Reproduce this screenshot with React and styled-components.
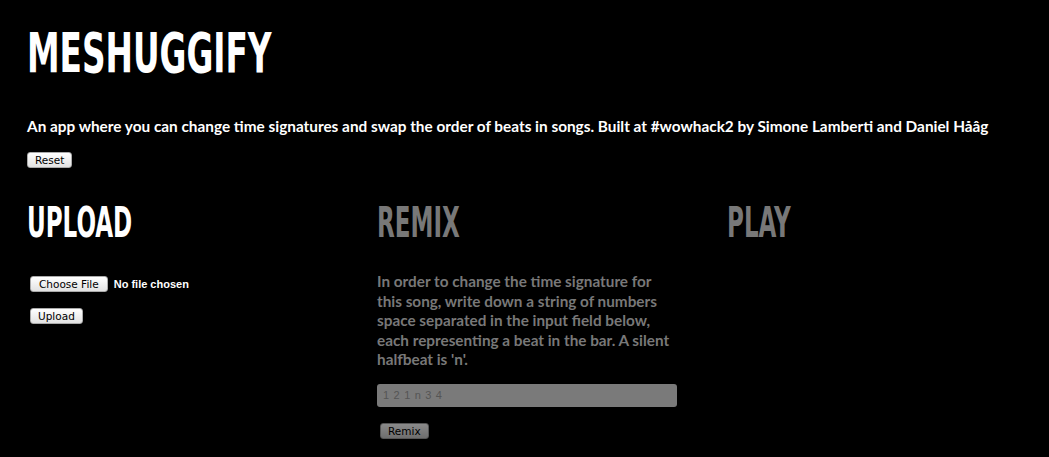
import React from 'react';
import styled, { createGlobalStyle } from 'styled-components';

const GlobalStyle = createGlobalStyle`
  html, body {
    margin: 0;
    padding: 0;
    background: #000;
  }

  body {
    font-family: Lato, "Liberation Sans", sans-serif;
    color: #fff;
  }
`;

const Page = styled.div`
  width: 1049px;
  height: 457px;
  padding: 0 27px;
  box-sizing: border-box;
  background: #000;
  overflow: hidden;
`;

const Title = styled.h1`
  margin: 0;
  padding-top: 22px;
  height: 62px;
  font-family: "DejaVu Sans Condensed", "DejaVu Sans", sans-serif;
  font-weight: 700;
  font-size: 56px;
  line-height: 62px;
  transform: scaleX(0.65);
  transform-origin: left center;
  white-space: nowrap;
`;

const Tagline = styled.p`
  margin: 32px 0 0;
  font-weight: 700;
  font-size: 15.35px;
  line-height: 20px;
  white-space: nowrap;
`;

const Button = styled.button`
  display: inline-block;
  height: 16px;
  padding: 0 ${({ wide }) => (wide ? 8 : 7)}px;
  border: 1px solid ${({ muted }) => (muted ? '#555' : '#aaa')};
  border-radius: 3px;
  background: ${({ muted }) => (muted ? 'linear-gradient(#8a8a8a, #6e6e6e)' : 'linear-gradient(#fff, #e2e2e2)')};
  color: #000;
  font-family: "DejaVu Sans", "Liberation Sans", sans-serif;
  font-size: 10.5px;
  line-height: 14px;
  box-sizing: border-box;
`;

const ButtonRow = styled.div`
  display: flex;
  align-items: center;
  gap: 6px;
  margin-top: ${({ gap }) => gap}px;
  padding-left: ${({ inset }) => inset || 0}px;
`;

const Columns = styled.div`
  display: grid;
  grid-template-columns: 350px 350px 295px;
  margin-top: 32px;
`;

const Column = styled.section`
  display: flex;
  flex-direction: column;
  align-items: flex-start;
  color: ${({ dim }) => (dim ? '#787878' : '#fff')};
`;

const Heading = styled.h2`
  margin: 0;
  height: 46px;
  font-family: "DejaVu Sans Condensed", "DejaVu Sans", sans-serif;
  font-weight: 700;
  font-size: 42px;
  line-height: 46px;
  transform: scaleX(0.61);
  transform-origin: left center;
  white-space: nowrap;
`;

const FileLabel = styled.span`
  font-family: "Liberation Sans", Arial, sans-serif;
  font-weight: 700;
  font-size: 11px;
  color: #fff;
`;

const Description = styled.p`
  margin: 26px 0 0;
  width: 298px;
  font-weight: 700;
  font-size: 15.3px;
  line-height: 19.5px;
`;

const BeatInput = styled.input`
  margin-top: 14px;
  width: 300px;
  height: 23px;
  box-sizing: border-box;
  border: none;
  border-radius: 3px;
  background: #7a7a7a;
  padding: 0 6px;
  font-family: "Liberation Sans", Arial, sans-serif;
  font-size: 11px;
  letter-spacing: 0.7px;

  &::placeholder {
    color: #555;
  }
`;

const App = () => (
  <Page>
    <GlobalStyle />
    <Title>MESHUGGIFY</Title>
    <Tagline>
      An app where you can change time signatures and swap the order of beats in songs. Built at #wowhack2 by Simone Lamberti and Daniel Håâg
    </Tagline>
    <ButtonRow gap={16}>
      <Button>Reset</Button>
    </ButtonRow>

    <Columns>
      <Column>
        <Heading>UPLOAD</Heading>
        <ButtonRow gap={30} inset={3}>
          <Button wide>Choose File</Button>
          <FileLabel>No file chosen</FileLabel>
        </ButtonRow>
        <ButtonRow gap={16} inset={3}>
          <Button>Upload</Button>
        </ButtonRow>
      </Column>

      <Column dim>
        <Heading>REMIX</Heading>
        <Description>
          In order to change the time signature for this song, write down a string of numbers space separated in the input field below, each representing a beat in the bar. A silent halfbeat is 'n'.
        </Description>
        <BeatInput placeholder="1 2 1 n 3 4" />
        <ButtonRow gap={16} inset={3}>
          <Button muted>Remix</Button>
        </ButtonRow>
      </Column>

      <Column dim>
        <Heading>PLAY</Heading>
      </Column>
    </Columns>
  </Page>
);

export default App;
